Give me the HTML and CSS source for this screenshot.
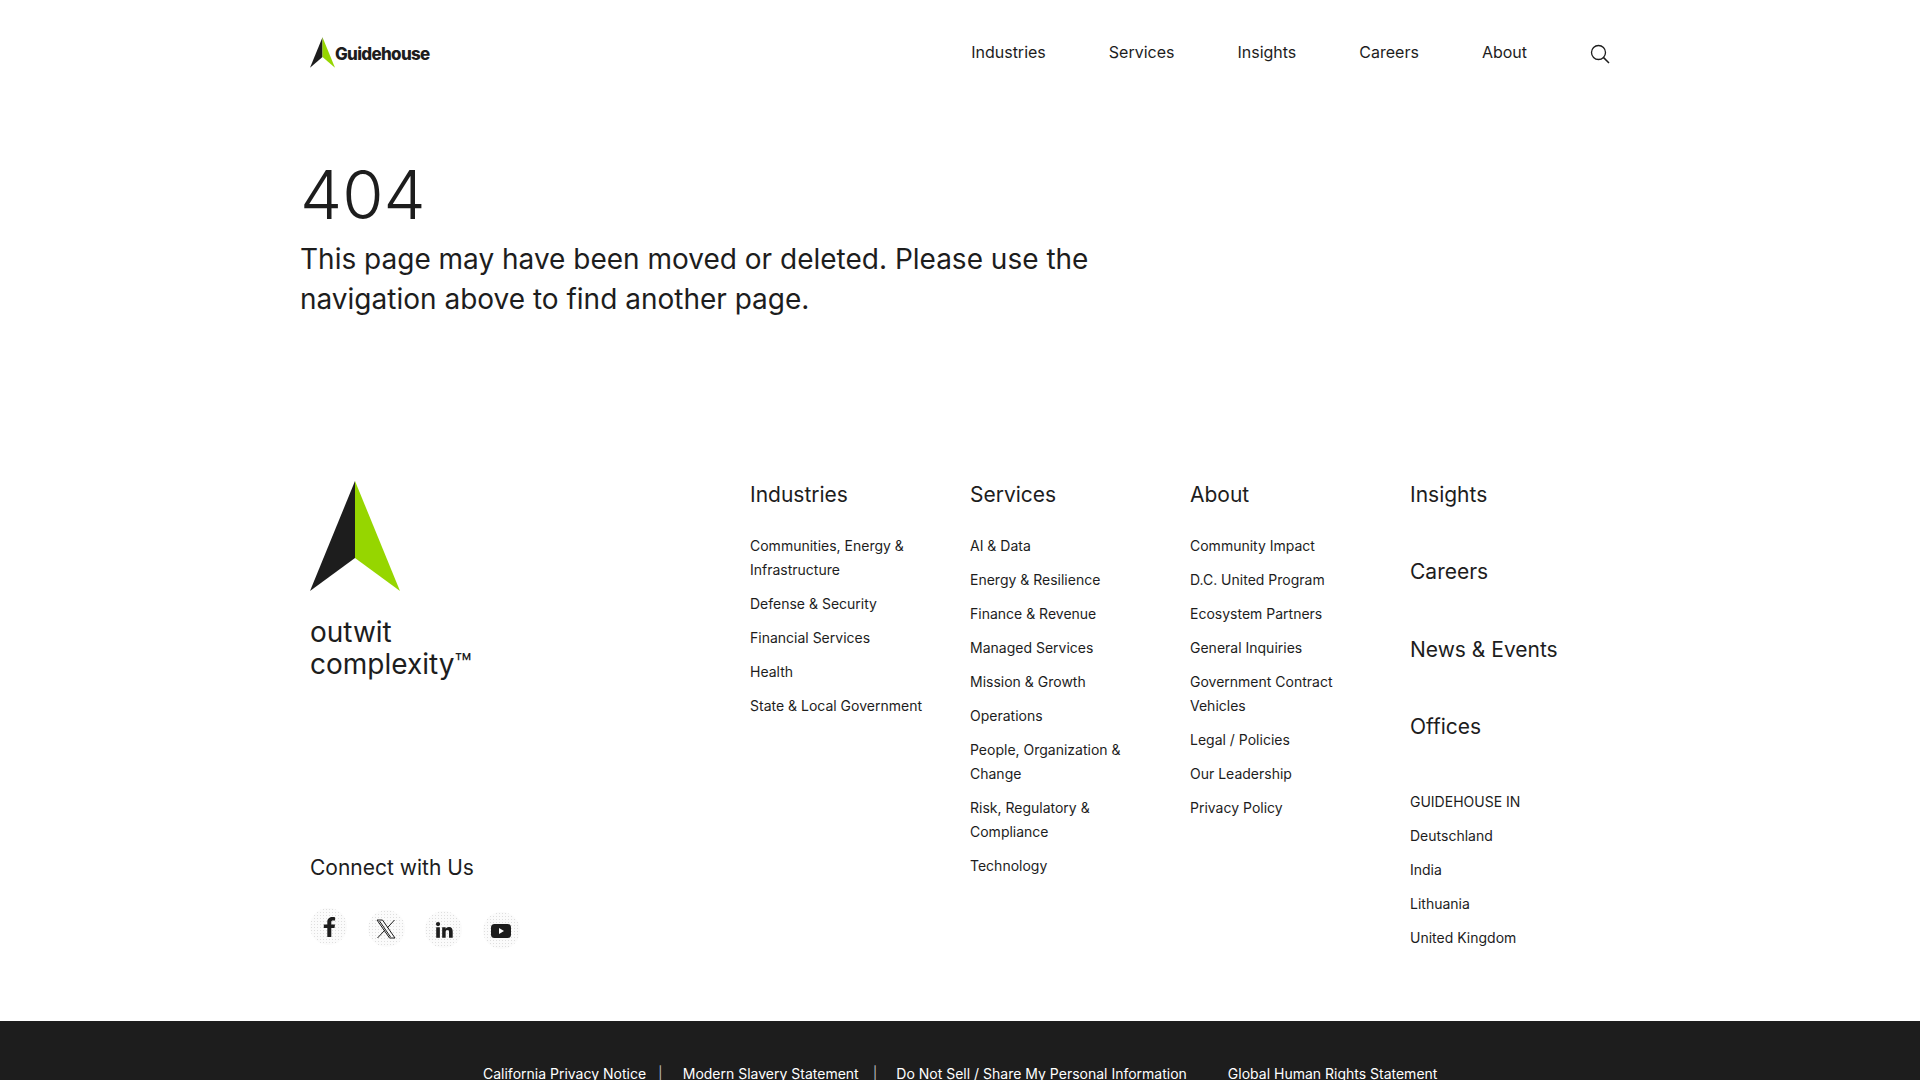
FILE: index.html
```html
<!DOCTYPE html>
<html lang="en">
<head>
<meta charset="utf-8">
<title>Guidehouse</title>
<link rel="stylesheet" href="styles.css">
</head>
<body>
<div class="page">
  <header class="topbar">
    <a class="brand">
      <svg class="brand-mark" viewBox="0 0 90 110"><polygon points="45,0 45,71 0,110" fill="#1d1d1d"/><polygon points="45,0 45,71 90,110" fill="#96d600"/></svg>
      <span class="brand-name">Guidehouse</span>
    </a>
    <nav class="nav">
      <a>Industries</a><a>Services</a><a>Insights</a><a>Careers</a><a>About</a>
      <svg class="search" viewBox="0 0 20 20"><circle cx="8.500" cy="8.500" r="7" fill="none" stroke="#1d1d1d" stroke-width="1.300"/><path d="M13.600 13.600L19 19" stroke="#1d1d1d" stroke-width="1.500" fill="none"/></svg>
    </nav>
  </header>

  <main class="error">
    <h1>404</h1>
    <p>This page may have been moved or deleted. Please use the navigation above to find another page.</p>
  </main>

  <footer class="footer">
    <div class="footer-main">
      <div class="aside">
        <svg class="big-mark" viewBox="0 0 90 110"><polygon points="45,0 45,77 0,110" fill="#1d1d1d"/><polygon points="45,0 45,77 90,110" fill="#96d600"/></svg>
        <div class="tagline">outwit<br>complexity™</div>
        <div class="connect">Connect with Us</div>
        <div class="socials">
          <a class="social s1"><svg viewBox="0 0 24 24"><path d="M14.300 22v-9h3.200l.5-3.600h-3.700V7.200c0-1 .4-1.700 1.800-1.700h2V2.200C17.700 2.100 16.600 2 15.400 2 12.600 2 10.300 3.700 10.300 6.700v2.700H6.800V13h3.500v9z" fill="#1d1d1d"/></svg></a>
          <a class="social s2"><svg viewBox="0 0 24 24"><path d="M3 3h5.500L21 21h-5.500zM20.500 3l-7.300 8M10.800 13.200L3.500 21M5.500 4l11 16" fill="none" stroke="#1d1d1d" stroke-width="1"/></svg></a>
          <a class="social s3"><svg viewBox="0 0 24 24"><circle cx="5.500" cy="5.500" r="2.300" fill="#1d1d1d"/><rect x="3.500" y="9" width="4" height="11.500" fill="#1d1d1d"/><path d="M10 9h3.800v1.700c.7-1.200 2-2 3.600-2 3 0 4.100 1.900 4.100 4.900v6.900h-4v-6.100c0-1.400-.4-2.300-1.700-2.300-1.400 0-2 1-2 2.400v6h-3.800z" fill="#1d1d1d"/></svg></a>
          <a class="social s4"><svg viewBox="0 0 24 24"><rect x="2" y="5" width="20" height="14" rx="3.500" fill="#1d1d1d"/><polygon points="10,9 15,12 10,15" fill="#fff"/></svg></a>
        </div>
      </div>
      <div class="col">
        <h3>Industries</h3>
        <ul>
          <li>Communities, Energy &amp; Infrastructure</li>
          <li>Defense &amp; Security</li>
          <li>Financial Services</li>
          <li>Health</li>
          <li>State &amp; Local Government</li>
        </ul>
      </div>
      <div class="col">
        <h3>Services</h3>
        <ul>
          <li>AI &amp; Data</li>
          <li>Energy &amp; Resilience</li>
          <li>Finance &amp; Revenue</li>
          <li>Managed Services</li>
          <li>Mission &amp; Growth</li>
          <li>Operations</li>
          <li>People, Organization &amp; Change</li>
          <li>Risk, Regulatory &amp; Compliance</li>
          <li>Technology</li>
        </ul>
      </div>
      <div class="col">
        <h3>About</h3>
        <ul>
          <li>Community Impact</li>
          <li>D.C. United Program</li>
          <li>Ecosystem Partners</li>
          <li>General Inquiries</li>
          <li>Government Contract Vehicles</li>
          <li>Legal / Policies</li>
          <li>Our Leadership</li>
          <li>Privacy Policy</li>
        </ul>
      </div>
      <div class="col">
        <h3 class="solo">Insights</h3>
        <h3 class="solo">Careers</h3>
        <h3 class="solo">News &amp; Events</h3>
        <h3>Offices</h3>
        <ul class="offices">
          <li>GUIDEHOUSE IN</li>
          <li>Deutschland</li>
          <li>India</li>
          <li>Lithuania</li>
          <li>United Kingdom</li>
        </ul>
      </div>
    </div>
    <div class="legal">
      <a>California Privacy Notice</a><span class="sep">|</span>
      <a>Modern Slavery Statement</a><span class="sep sep-wide">|</span>
      <a>Do Not Sell / Share My Personal Information</a>
      <a class="last">Global Human Rights Statement</a>
    </div>
  </footer>
</div>
</body>
</html>
```
FILE: styles.css
```css
* { box-sizing: border-box; }
html, body { margin: 0; height: 100%; overflow: hidden; background: #fff; }
body { font-family: Inter, "Liberation Sans", sans-serif; color: #1d1d1d; }
.page { width: 1920px; height: 1080px; overflow: hidden; }
a { color: inherit; text-decoration: none; }

.topbar { height: 104px; padding: 0 300px 0 310px; display: flex; align-items: center; justify-content: space-between; }
.brand { display: flex; align-items: center; gap: 0; padding-top: 1px; }
.brand-mark { width: 25px; height: 31px; display: block; }
.brand-name { font-size: 17px; font-weight: 800; letter-spacing: -0.7px; padding-top: 3px; }
.nav { display: flex; align-items: center; font-size: 16px; line-height: 24px; gap: 63px; padding-right: 10px; }
.search { width: 20px; height: 20px; margin-top: 4px; }

.error { padding: 49px 300px 0; }
.error h1 { margin: 0; font-size: 67px; line-height: 84px; font-weight: 300; letter-spacing: 0; }
.error p { margin: 0; width: 820px; font-size: 28px; line-height: 40px; font-weight: 400; padding-top: 2px; }

.footer-main { display: grid; grid-template-columns: 440px repeat(4, 220px); padding: 160px 0 0 310px; height: 702px; }
.aside { display: flex; flex-direction: column; }
.big-mark { width: 90px; height: 110px; display: block; margin-top: 2px; }
.tagline { font-size: 28px; line-height: 32px; margin-top: 25px; }
.connect { font-size: 21px; line-height: 28px; margin-top: 174px; }
.socials { display: flex; gap: 20.500px; margin-top: 26px; }
.social { width: 37px; height: 37px; border-radius: 50%; background-color: #fbfbfb; background-image: radial-gradient(circle, #dedede 0.7px, transparent 0.9px); background-size: 3px 3px; display: flex; align-items: center; justify-content: center; }
.social svg { width: 24px; height: 24px; }
.s2 { margin-top: 2px; } .s3 { margin-top: 3px; } .s4 { margin-top: 4px; }
.s3 svg { width: 22px; height: 22px; }

.col { padding-top: 2px; }
.col h3 { margin: 0; font-size: 21px; line-height: 28px; font-weight: 400; }
.col ul { list-style: none; margin: 25px 0 0; padding: 0; font-size: 14px; line-height: 24px; }
.col li { margin-bottom: 10px; width: 178px; }
.col:nth-child(2) li { width: 200px; }
.col .solo { margin-bottom: 49.400px; }
.col .offices { margin-top: 49px; }

.legal { height: 59px; background: #1d1d1d; color: #fff; font-size: 14px; line-height: 24px; padding-top: 41px; display: flex; padding-left: 483px; white-space: nowrap; }
.sep { margin: 0 20px 0 12px; color: #b5b5b5; }
.sep-wide { margin: 0 19px 0 14px; }
.last { margin-left: 41px; }
```
